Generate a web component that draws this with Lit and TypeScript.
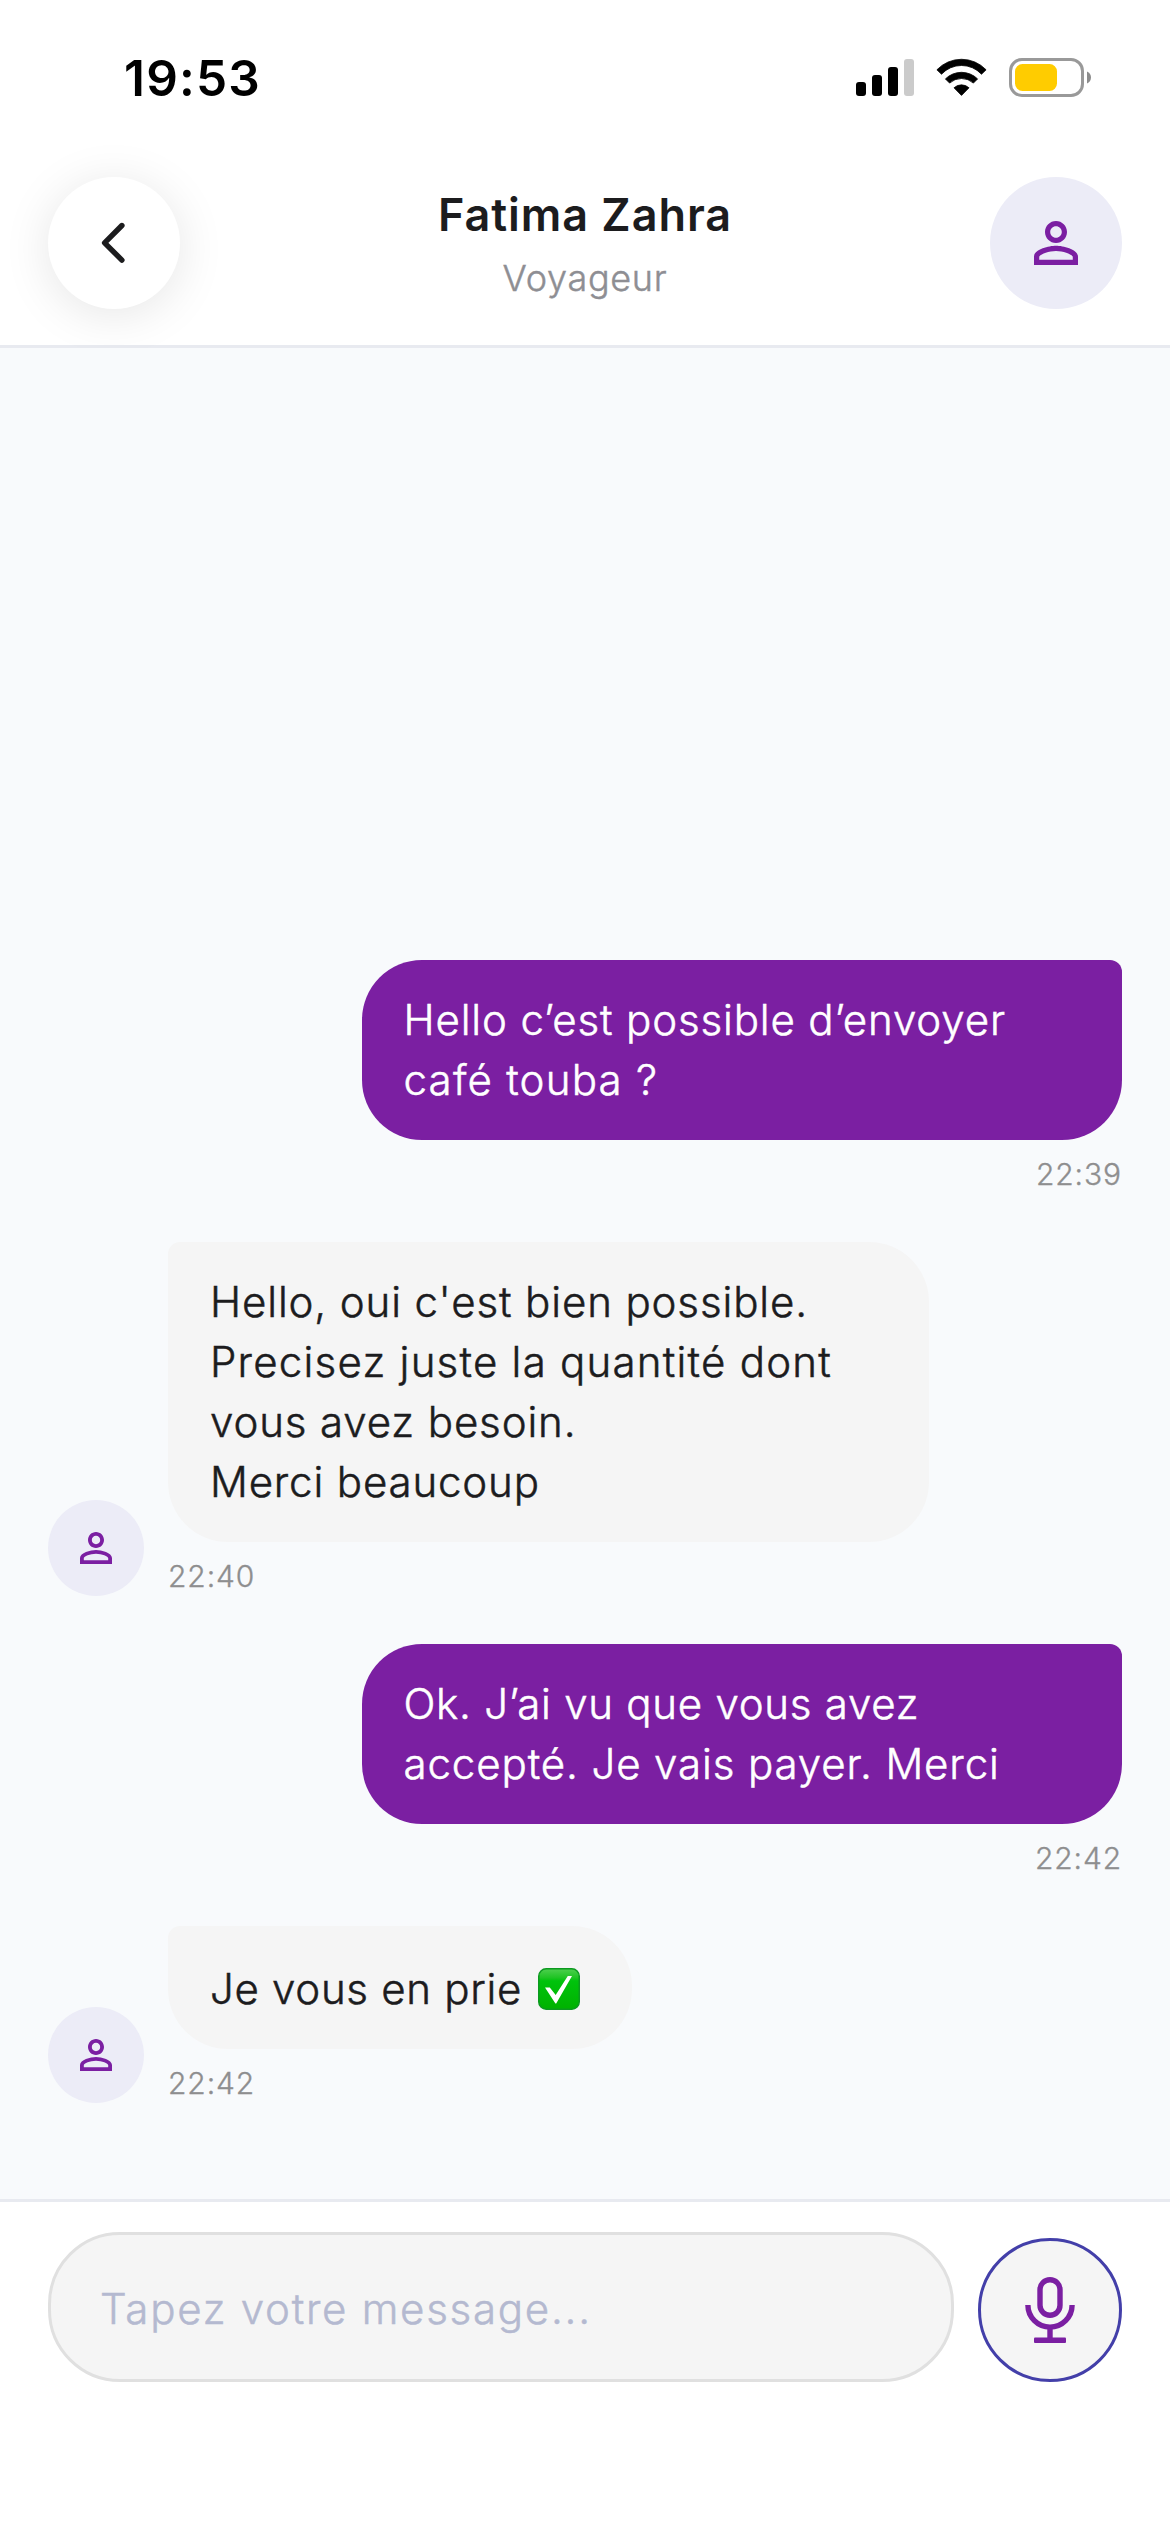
import { LitElement, html, css, svg, nothing } from "lit";
import { customElement, property } from "lit/decorators.js";
import { classMap } from "lit/directives/class-map.js";
import { styleMap } from "lit/directives/style-map.js";

interface Line {
  text: string;
  tracking: number;
}

interface Message {
  lines: Line[];
  time: string;
  outgoing: boolean;
  check?: boolean;
}

const MESSAGES: Message[] = [
  {
    lines: [
      { text: "Hello c’est possible d’envoyer", tracking: 0.86 },
      { text: "café touba ?", tracking: 1.22 },
    ],
    time: "22:39",
    outgoing: true,
  },
  {
    lines: [
      { text: "Hello, oui c'est bien possible.", tracking: 0.88 },
      { text: "Precisez juste la quantité dont", tracking: 1.24 },
      { text: "vous avez besoin.", tracking: 0.88 },
      { text: "Merci beaucoup", tracking: 0.85 },
    ],
    time: "22:40",
    outgoing: false,
  },
  {
    lines: [
      { text: "Ok. J’ai vu que vous avez", tracking: 0.74 },
      { text: "accepté. Je vais payer. Merci", tracking: 0.9 },
    ],
    time: "22:42",
    outgoing: true,
  },
  { lines: [{ text: "Je vous en prie", tracking: 0.7 }], time: "22:42", outgoing: false, check: true },
];

const personPath = svg`<path d="M12 5.9c1.16 0 2.1.94 2.1 2.1s-.94 2.1-2.1 2.1S9.9 9.16 9.9 8s.94-2.1 2.1-2.1m0 9c2.97 0 6.1 1.46 6.1 2.1v1.1H5.9V17c0-.64 3.13-2.1 6.1-2.1M12 4C9.79 4 8 5.79 8 8s1.79 4 4 4 4-1.79 4-4-1.79-4-4-4zm0 9c-2.67 0-8 1.34-8 4v3h16v-3c0-2.66-5.33-4-8-4z"/>`;

@customElement("user-avatar")
class UserAvatar extends LitElement {
  @property({ type: Number }) size = 96;

  static styles = css`
    :host {
      display: block;
      flex: none;
    }
    .disc {
      display: flex;
      align-items: center;
      justify-content: center;
      border-radius: 50%;
      background: #ececf7;
    }
    .icon {
      display: block;
      width: 50%;
      height: 50%;
      fill: #7b1fa2;
    }
  `;

  render() {
    const box = { width: `${this.size}px`, height: `${this.size}px` };
    return html`<div class="disc" style=${styleMap(box)}>
      <svg class="icon" viewBox="0 0 24 24">${personPath}</svg>
    </div>`;
  }
}

@customElement("status-bar")
class StatusBar extends LitElement {
  static styles = css`
    :host {
      display: flex;
      align-items: flex-start;
      justify-content: space-between;
      box-sizing: border-box;
      height: 141px;
      padding: 58px 79px 0 124px;
    }
    .clock {
      font-size: 49.5px;
      font-weight: 600;
      line-height: 40px;
      letter-spacing: 1.2px;
      color: #000;
    }
    .icons {
      display: flex;
      gap: 22px;
    }
    svg {
      display: block;
    }
  `;

  render() {
    return html`
      <div class="clock">19:53</div>
      <div class="icons">
        <svg width="58" height="39" viewBox="0 0 58 39">
          <rect x="0" y="24" width="10" height="14" rx="3" />
          <rect x="16" y="17" width="10" height="21" rx="3" />
          <rect x="32" y="9" width="10" height="29" rx="3" />
          <rect x="48" y="1" width="10" height="37" rx="3" fill="#cbcbcb" />
        </svg>
        <svg width="51" height="39" viewBox="0 0 51 39">
          <g stroke="#000" stroke-width="0.8" stroke-linejoin="round">
            <path d="M0.9 11.8A34 34 0 0 1 50.1 11.8L45.5 16.2A27.3 27.3 0 0 0 5.5 16.2Z" />
            <path d="M9.4 20.9A23 23 0 0 1 41.6 20.9L37.4 25.1A17.7 17.7 0 0 0 13.6 25.1Z" />
            <path d="M18 29.8A11 11 0 0 1 33 29.8L25.5 37.4Z" />
          </g>
        </svg>
        <svg width="82" height="39" viewBox="0 0 82 39">
          <rect x="1.5" y="1.5" width="72" height="36" rx="11.5" fill="none" stroke="#999" stroke-width="3" />
          <rect x="6" y="6" width="42" height="27" rx="7.5" fill="#fc0" />
          <path d="M78 13.5c2.4.9 4 3.3 4 6s-1.6 5.1-4 6z" fill="#8c8c8c" />
        </svg>
      </div>
    `;
  }
}

@customElement("chat-header")
class ChatHeader extends LitElement {
  static styles = css`
    :host {
      display: grid;
      grid-template-columns: 132px 1fr 132px;
      align-items: center;
      padding: 36px 48px;
      border-bottom: 3px solid #e8eaf0;
    }
    .back {
      display: flex;
      align-items: center;
      justify-content: center;
      width: 132px;
      height: 132px;
      border-radius: 50%;
      background: #fff;
      box-shadow: 0 6px 48px rgba(0, 0, 0, 0.1);
    }
    .titles {
      display: flex;
      flex-direction: column;
      align-items: center;
      gap: 3px;
    }
    .name {
      font-size: 45px;
      font-weight: 600;
      line-height: 66px;
      letter-spacing: 0.95px;
      color: #1c1c1e;
    }
    .role {
      font-size: 36px;
      font-weight: 300;
      line-height: 54px;
      letter-spacing: 0.7px;
      color: #8e8e93;
      -webkit-text-stroke: 0.45px currentColor;
    }
  `;

  render() {
    return html`
      <div class="back">
        <svg width="26" height="42" viewBox="0 0 26 42">
          <path
            d="M20.9 3.5L3.6 20.8L20.9 38.1"
            fill="none"
            stroke="#1c1c1e"
            stroke-width="5.4"
            stroke-linecap="round"
            stroke-linejoin="round"
          />
        </svg>
      </div>
      <div class="titles">
        <div class="name">Fatima Zahra</div>
        <div class="role">Voyageur</div>
      </div>
      <user-avatar .size=${132}></user-avatar>
    `;
  }
}

@customElement("chat-message")
class ChatMessage extends LitElement {
  @property({ attribute: false }) message!: Message;

  static styles = css`
    :host {
      display: block;
    }
    .row {
      display: flex;
      align-items: flex-end;
      gap: 24px;
    }
    .row.out {
      justify-content: flex-end;
    }
    .stack {
      display: flex;
      flex-direction: column;
      align-items: flex-start;
    }
    .out .stack {
      align-items: flex-end;
    }
    .bubble {
      box-sizing: border-box;
      padding: 30px 42px;
      border-radius: 12px 60px 60px 60px;
      background: #f5f5f5;
      color: #1c1c1e;
      font-size: 42px;
      font-weight: 300;
      line-height: 60px;
      white-space: nowrap;
      -webkit-text-stroke: 0.5px currentColor;
    }
    .bubble.multiline {
      width: 760.5px;
    }
    .out .bubble {
      border-radius: 60px 12px 60px 60px;
      background: #7b1fa2;
      color: #fff;
    }
    .time {
      padding-top: 13px;
      font-size: 30px;
      font-weight: 300;
      line-height: 42px;
      margin-bottom: -1px;
      letter-spacing: 0.9px;
      color: #8e8e8f;
      -webkit-text-stroke: 0.35px currentColor;
    }
    .check {
      display: inline-block;
      width: 42px;
      height: 42px;
      margin: 12px 10.5px 0 3.5px;
      vertical-align: -6px;
    }
  `;

  private renderCheck() {
    return html` <svg class="check" viewBox="0 0 42 42">
      <defs>
        <linearGradient id="face" x1="0" y1="0" x2="0" y2="1">
          <stop offset="0" stop-color="#4fcf4f" />
          <stop offset="0.22" stop-color="#1fc424" />
          <stop offset="0.3" stop-color="#00c30c" />
          <stop offset="1" stop-color="#00b200" />
        </linearGradient>
      </defs>
      <rect x="0.75" y="0.75" width="40.5" height="40.5" rx="7.5" fill="url(#face)" stroke="#0c9a20" stroke-width="1.5" />
      <path d="M7 19.5H11.8L17.7 27L29.8 8H34L18.2 35.5H17.4Z" fill="#fff" />
    </svg>`;
  }

  render() {
    const { lines, time, outgoing, check } = this.message;
    return html`<div class=${classMap({ row: true, out: outgoing })}>
      ${outgoing ? nothing : html`<user-avatar .size=${96}></user-avatar>`}
      <div class="stack">
        <div class=${classMap({ bubble: true, multiline: lines.length > 1 })}>
          ${lines.map(
            ({ text, tracking }) =>
              html`<div style=${styleMap({ letterSpacing: `${tracking}px` })}>${text}${check ? this.renderCheck() : nothing}</div>`
          )}
        </div>
        <div class="time">${time}</div>
      </div>
    </div>`;
  }
}

@customElement("message-composer")
class MessageComposer extends LitElement {
  static styles = css`
    :host {
      display: flex;
      align-items: flex-end;
      gap: 24px;
      box-sizing: border-box;
      height: 333px;
      padding: 30px 48px 150px;
      border-top: 3px solid #e8eaf0;
      background: #fff;
    }
    .field {
      flex: 1;
      box-sizing: border-box;
      height: 150px;
      padding: 2px 48px 0 49px;
      border: 3px solid #e0e0e0;
      border-radius: 72px;
      background: #f5f5f5;
      font-size: 42px;
      font-weight: 300;
      line-height: 144px;
      letter-spacing: 1.74px;
      color: #b4b9d0;
      -webkit-text-stroke: 0.5px currentColor;
    }
    .mic {
      display: flex;
      align-items: center;
      justify-content: center;
      box-sizing: border-box;
      width: 144px;
      height: 144px;
      border: 3px solid #433fa9;
      border-radius: 50%;
      background: #f5f5f5;
    }
  `;

  render() {
    return html`
      <div class="field" role="textbox">Tapez votre message...</div>
      <div class="mic">
        <svg width="50" height="66" viewBox="0 0 50 66" fill="none" stroke="#7b1fa2" stroke-width="5.4">
          <rect x="15" y="2.7" width="20" height="35.6" rx="10" />
          <path d="M2.9 28a22.1 22.1 0 0 0 44.2 0M25 51v11" />
          <rect x="9" y="60.5" width="32" height="5.5" rx="1" fill="#7b1fa2" stroke="none" />
        </svg>
      </div>
    `;
  }
}

@customElement("app-root")
class AppRoot extends LitElement {
  static styles = css`
    :host {
      display: flex;
      flex-direction: column;
      width: 1170px;
      height: 2532px;
      overflow: hidden;
      background: #fff;
      font-family: Inter, "Liberation Sans", sans-serif;
    }
    .thread {
      display: flex;
      flex: 1;
      flex-direction: column;
      justify-content: flex-end;
      gap: 48px;
      padding: 48px 48px 96px;
      background: #f8fafc;
    }
  `;

  render() {
    return html`
      <status-bar></status-bar>
      <chat-header></chat-header>
      <main class="thread">${MESSAGES.map((m) => html`<chat-message .message=${m}></chat-message>`)}</main>
      <message-composer></message-composer>
    `;
  }
}
